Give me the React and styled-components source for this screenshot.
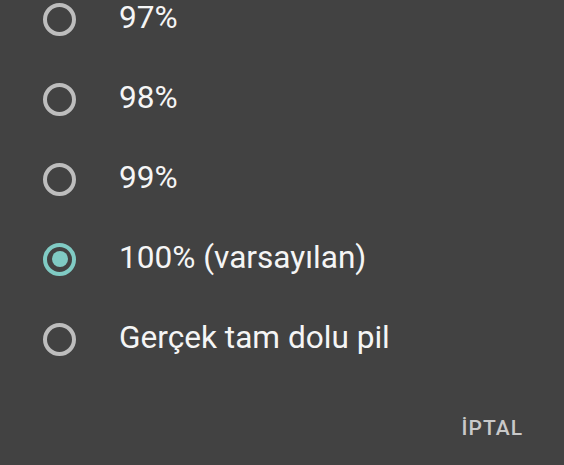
import React from 'react';
import styled, { createGlobalStyle } from 'styled-components';

const GlobalStyle = createGlobalStyle`
  html, body {
    margin: 0;
    padding: 0;
    background: #424242;
  }
  body {
    font-family: Roboto, "Noto Sans", sans-serif;
  }
`;

const Dialog = styled.div`
  width: 564px;
  height: 465px;
  overflow: hidden;
  background: #424242;
  display: flex;
  flex-direction: column;
`;

const OptionList = styled.div`
  display: flex;
  flex-direction: column;
  margin-top: -21px;
`;

const Option = styled.div`
  display: flex;
  align-items: center;
  height: 80px;
  padding-left: 43px;
  gap: 43px;
`;

const Radio = styled.div`
  box-sizing: border-box;
  width: 33px;
  height: 33px;
  border-radius: 50%;
  border: 4px solid ${props => props.checked ? '#80cbc4' : '#bdbdbd'};
  display: flex;
  align-items: center;
  justify-content: center;
  flex-shrink: 0;
  &::after {
    content: '';
    display: ${props => props.checked ? 'block' : 'none'};
    width: 16px;
    height: 16px;
    border-radius: 50%;
    background: #80cbc4;
  }
`;

const Label = styled.span`
  font-size: 31.6px;
  color: #f5f5f5;
  white-space: nowrap;
  line-height: 1;
  margin-top: -2px;
`;

const Footer = styled.div`
  display: flex;
  justify-content: flex-end;
  padding: 39px 41px 0 0;
`;

const TextButton = styled.div`
  font-size: 21px;
  font-weight: 500;
  letter-spacing: 1px;
  color: #c9c9c9;
  line-height: 1;
`;

const options = ['97%', '98%', '99%', '100% (varsayılan)', 'Gerçek tam dolu pil'];
const selected = 3;

export default function App() {
  return (
    <Dialog>
      <GlobalStyle />
      <OptionList>
        {options.map((text, i) => (
          <Option key={text}>
            <Radio checked={i === selected} />
            <Label>{text}</Label>
          </Option>
        ))}
      </OptionList>
      <Footer>
        <TextButton>İPTAL</TextButton>
      </Footer>
    </Dialog>
  );
}
